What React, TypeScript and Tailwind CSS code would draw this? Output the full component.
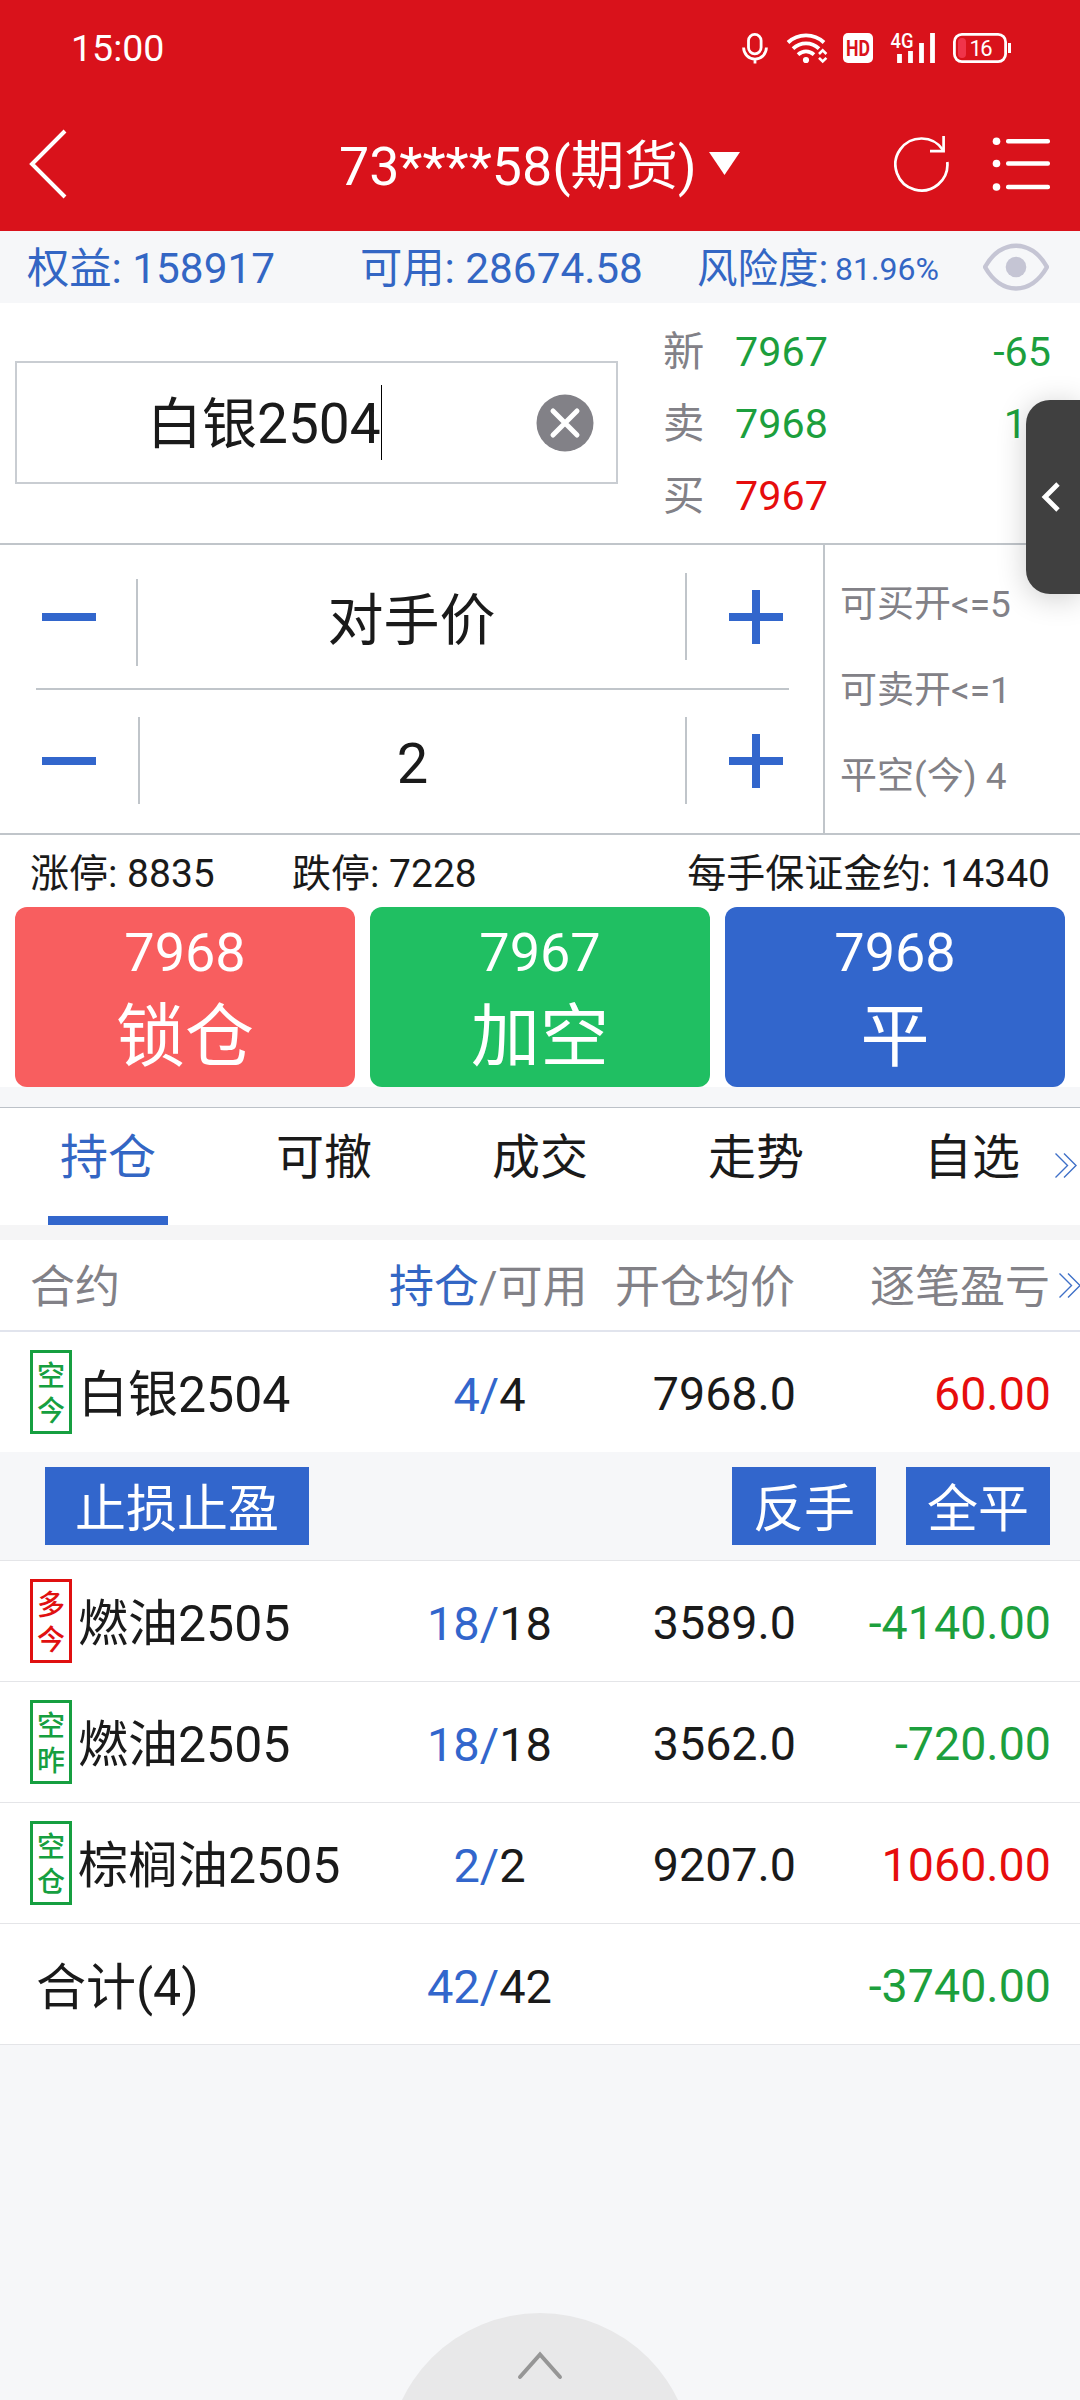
import React, { useState } from "react";

interface IPosition {
  tag: string[];
  side: "long" | "short";
  name: string;
  hold: string;
  usable: string;
  price: string;
  profit: string;
}

const positions: IPosition[] = [
  { tag: ["空", "今"], side: "short", name: "白银2504", hold: "4", usable: "4", price: "7968.0", profit: "60.00" },
  { tag: ["多", "今"], side: "long", name: "燃油2505", hold: "18", usable: "18", price: "3589.0", profit: "-4140.00" },
  { tag: ["空", "昨"], side: "short", name: "燃油2505", hold: "18", usable: "18", price: "3562.0", profit: "-720.00" },
  { tag: ["空", "仓"], side: "short", name: "棕榈油2505", hold: "2", usable: "2", price: "9207.0", profit: "1060.00" },
];

const tabs = ["持仓", "可撤", "成交", "走势", "自选"];

const profitColor = (value: string) =>
  value.startsWith("-") ? "text-[#1c9f3d]" : "text-[#e60d0d]";

const StatusBar = () => (
  <div className="flex h-[96px] items-center justify-between pl-[71px] pr-[68px]">
    <span className="pt-[2px] text-[37.5px] leading-none">15:00</span>
    <svg width="272" height="50" viewBox="740 23 272 50" fill="none">
      {/* mic */}
      <rect x="748.5" y="34.3" width="12.6" height="19.5" rx="6.3" stroke="white" strokeWidth="2.8" />
      <path d="M743.6 47.5a11.4 11.6 0 0 0 22.8 0M755 59v4.5" stroke="white" strokeWidth="2.8" />
      {/* wifi */}
      <path d="M788 42.5c10-9.5 26-9.5 36 0" stroke="white" strokeWidth="3.8" />
      <path d="M793 48.7c7.5-7 18.5-7 26 0" stroke="white" strokeWidth="3.8" />
      <path d="M798 54.6c5-4.3 11-4.3 16 0" stroke="white" strokeWidth="3.8" />
      <circle cx="806" cy="60" r="3.1" fill="white" />
      <path d="M819 54l3.7-3.7 3.7 3.7M819 57.8l3.7 3.7 3.7-3.7" stroke="white" strokeWidth="2.6" />
      {/* hd */}
      <rect x="843" y="33" width="30" height="30" rx="5" fill="white" />
      <text x="858" y="56" fontSize="22" fontWeight="700" textAnchor="middle" textLength="24" lengthAdjust="spacingAndGlyphs" fill="#d9121b">
        HD
      </text>
      {/* signal */}
      <text x="890.5" y="47.5" fontSize="20" fontWeight="500" textLength="23" lengthAdjust="spacingAndGlyphs" fill="white">
        4G
      </text>
      <path d="M899.5 54v9M910.5 51v12M921.5 43v20M932.5 33v30" stroke="white" strokeWidth="4.8" />
      {/* battery */}
      <rect x="954.4" y="34.4" width="51.2" height="27.2" rx="7.5" stroke="white" strokeWidth="2.8" />
      <rect x="958" y="38" width="8" height="20" rx="4" fill="#f0344a" />
      <path d="M1009.5 43v10" stroke="white" strokeWidth="3" />
      <text x="969.5" y="55.5" fontSize="22" fill="white" textLength="23">
        16
      </text>
    </svg>
  </div>
);

const TitleBar = () => (
  <div className="flex h-[135px] items-center px-[28px]">
    <svg width="40" height="70" viewBox="0 0 40 70" fill="none">
      <path d="M37 2L4 35L37 68" stroke="white" strokeWidth="4" />
    </svg>
    <div className="ml-[271px] flex items-center gap-[12px]">
      <span className="pt-[7px] text-[53.7px] leading-none whitespace-nowrap">73****58(期货)</span>
      <svg width="31" height="23" viewBox="0 0 31 23">
        <path d="M0 0H31L15.5 23Z" fill="white" />
      </svg>
    </div>
    <div className="ml-auto flex items-center gap-[42px]">
      <svg width="56" height="58" viewBox="894 135 56 58" fill="none">
        <path d="M943 150A26 26 0 1 0 947.3 162" stroke="white" strokeWidth="2.7" />
        <path d="M943.6 136v15.2H930" stroke="white" strokeWidth="2.7" />
      </svg>
      <svg width="60" height="56" viewBox="992 135 60 56">
        {[140.3, 162.5, 186].map((y) => (
          <g key={y} fill="white">
            <circle cx="996.5" cy={y} r="3.8" />
            <rect x="1006" y={y - 2.3} width="44" height="4.6" rx="2" />
          </g>
        ))}
      </svg>
    </div>
  </div>
);

const Funds = () => (
  <div className="flex h-[72px] items-center bg-[#f6f7f9] pl-[27px] text-[42.3px] leading-none text-[#3366c4] whitespace-nowrap">
    <span className="w-[333px] pt-[5px]">权益: 158917</span>
    <span className="w-[337px] pt-[5px]">可用: 28674.58</span>
    <span className="w-[138px] pt-[5px] text-[40.5px]">风险度:</span>
    <span className="w-[148px] pt-[3px] text-[32px]">81.96%</span>
    <svg width="66" height="48" viewBox="0 0 66 48" fill="none">
      <path d="M2 24C18-4.5 48-4.5 64 24C48 52.5 18 52.5 2 24Z" stroke="#c5c5d4" strokeWidth="4.5" />
      <circle cx="33" cy="24" r="10.3" fill="#c5c5d4" />
    </svg>
  </div>
);

const QuoteRow = ({ label, price, color, volume, cut }: { label: string; price: string; color: string; volume?: string; cut?: boolean }) => (
  <div className="flex h-[72px] items-center">
    <span className="w-[72px] text-[#828187]">{label}</span>
    <span className={color}>{price}</span>
    <span className={`ml-auto text-[#1c9f3d] ${cut ? "pr-[53px]" : "pr-[29px]"}`}>{volume}</span>
  </div>
);

const Contract = () => (
  <div className="flex h-[240px] bg-white">
    <div className="mt-[58px] ml-[15px] flex h-[123px] w-[603px] items-center border-2 border-[#c9cdd2] pl-[130px] pr-[22px]">
      <span className="mt-[4px] text-[55px] leading-none text-[#1a1a1a]">白银2504</span>
      <span className="h-[75px] w-px bg-black" />
      <svg width="58" height="58" viewBox="0 0 58 58" className="ml-auto">
        <circle cx="29" cy="29" r="28.5" fill="#828187" />
        <path d="M17 17L41 41M41 17L17 41" stroke="white" strokeWidth="5" strokeLinecap="round" />
      </svg>
    </div>
    <div className="ml-[45px] flex-1 pt-[14px] text-[41.3px] leading-none">
      <QuoteRow label="新" price="7967" color="text-[#1c9f3d]" volume="-65" />
      <QuoteRow label="卖" price="7968" color="text-[#1c9f3d]" volume="1" cut />
      <QuoteRow label="买" price="7967" color="text-[#e60d0d]" />
    </div>
  </div>
);

const Minus = () => (
  <svg width="54" height="54" viewBox="0 0 54 54">
    <path d="M0 27H54" stroke="#3266cc" strokeWidth="8" />
  </svg>
);

const Plus = () => (
  <svg width="54" height="54" viewBox="0 0 54 54">
    <path d="M0 27H54M27 0V54" stroke="#3266cc" strokeWidth="8" />
  </svg>
);

const OrderForm = () => {
  const [lots, setLots] = useState(2);

  return (
    <div className="flex h-[292px] border-y-2 border-[#c0c5ca] bg-white">
      <div className="w-[823px]">
        <div className="flex h-[143px] items-center pl-[42px]">
          <Minus />
          <span className="mt-[12px] ml-[40px] h-[87px] w-[2px] bg-[#c0c5ca]" />
          <span className="w-[547px] pt-[8px] text-center text-[56px] leading-none">对手价</span>
          <span className="mr-[42px] h-[87px] w-[2px] bg-[#c0c5ca]" />
          <Plus />
        </div>
        <div className="mr-[34px] ml-[36px] h-[2px] bg-[#c0c5ca]" />
        <div className="flex h-[143px] items-center pb-[2px] pl-[42px]">
          <button onClick={() => setLots(Math.max(1, lots - 1))}>
            <Minus />
          </button>
          <span className="ml-[42px] h-[87px] w-[2px] bg-[#c0c5ca]" />
          <span className="w-[545px] pt-[6px] text-center text-[56px] leading-none">{lots}</span>
          <span className="mr-[42px] h-[87px] w-[2px] bg-[#c0c5ca]" />
          <button onClick={() => setLots(lots + 1)}>
            <Plus />
          </button>
        </div>
      </div>
      <div className="flex flex-1 flex-col border-l-2 border-[#c0c5ca] pt-[17px] pl-[15px] text-[37px] leading-[86px] text-[#828187]">
        <span>可买开&lt;=5</span>
        <span>可卖开&lt;=1</span>
        <span>平空(今) 4</span>
      </div>
    </div>
  );
};

const OrderButton = ({ price, label, color }: { price: string; label: string; color: string }) => (
  <button className={`flex h-[180px] w-[340px] flex-col items-center rounded-[12px] leading-none text-white ${color}`}>
    <span className="mt-[19px] text-[54px]">{price}</span>
    <span className="mt-[23px] text-[69px]">{label}</span>
  </button>
);

const DoubleArrow = () => (
  <svg width="22" height="25" viewBox="0 0 22 25" fill="none" className="shrink-0">
    <path d="M0.5 0.5L12.5 12.5L0.5 24.5M9 0.5L21 12.5L9 24.5" stroke="#3f70c8" strokeWidth="1.4" />
  </svg>
);

const Tag = ({ position }: { position: IPosition }) => (
  <div
    className={`flex h-[84px] w-[42px] flex-col items-center justify-center border-3 pt-[3px] text-[28px] leading-[35px] font-medium ${
      position.side === "long" ? "border-[#e01010] text-[#e01010]" : "border-[#169f40] text-[#169f40]"
    }`}
  >
    {position.tag.map((t) => (
      <span key={t}>{t}</span>
    ))}
  </div>
);

const Lots = ({ hold, usable }: { hold: string; usable: string }) => (
  <span className="w-[181px] text-center text-[47px]">
    <span className="text-[#3266cc]">{hold}/</span>
    {usable}
  </span>
);

const PositionRow = ({ position }: { position: IPosition }) => (
  <div className="flex h-[120px] items-center bg-white pl-[30px] text-[46.6px] leading-none whitespace-nowrap">
    <Tag position={position} />
    <span className="ml-[6px] w-[321px] pt-[5px] text-[50px]">{position.name}</span>
    <div className="flex flex-1 items-center pt-[5px]">
      <Lots hold={position.hold} usable={position.usable} />
      <span className="w-[216px] text-right">{position.price}</span>
      <span className={`flex-1 pr-[29px] text-right ${profitColor(position.profit)}`}>{position.profit}</span>
    </div>
  </div>
);

const ActionButton = ({ label, width }: { label: string; width: string }) => (
  <button className={`flex h-[78px] items-center justify-center bg-[#3266cc] pt-[6px] text-[51px] leading-none text-white ${width}`}>
    {label}
  </button>
);

const App = () => {
  const [activeTab, setActiveTab] = useState("持仓");

  return (
    <div className="relative flex h-[2400px] w-[1080px] flex-col overflow-hidden bg-[#f6f7f9] font-[Roboto,'Noto_Sans_CJK_SC',sans-serif] text-[#1a1a1a]">
      <header className="bg-[#d9121b] text-white">
        <StatusBar />
        <TitleBar />
      </header>
      <Funds />
      <Contract />
      <OrderForm />

      <div className="bg-white">
        <div className="flex h-[72px] items-center pt-[6px] pr-[30px] pl-[30px] text-[39px] leading-none">
          <span className="w-[262px]">涨停: 8835</span>
          <span>跌停: 7228</span>
          <span className="ml-auto">每手保证金约: 14340</span>
        </div>
        <div className="flex gap-[15px] px-[15px]">
          <OrderButton price="7968" label="锁仓" color="bg-[#f85e5f]" />
          <OrderButton price="7967" label="加空" color="bg-[#20bf62]" />
          <OrderButton price="7968" label="平" color="bg-[#3266cc]" />
        </div>
      </div>

      <div className="relative mt-[20px] flex h-[118px] border-t border-[#bcc1c8] bg-white">
        {tabs.map((tab) => (
          <button
            key={tab}
            onClick={() => setActiveTab(tab)}
            className={`flex w-[216px] flex-col items-center text-[48px] leading-none ${tab === activeTab ? "text-[#3366c4]" : ""}`}
          >
            <span className="h-[108px] pt-[26px]">{tab}</span>
            {tab === activeTab && <span className="h-[9px] w-[120px] bg-[#3266cc]" />}
          </button>
        ))}
        <div className="absolute top-[45px] right-[3px]">
          <DoubleArrow />
        </div>
      </div>
      <div className="h-[15px] bg-[#f5f5f6]" />

      <div className="flex h-[92px] items-center border-b-2 border-[#e1e4ed] bg-white pl-[30px] text-[45px] leading-none whitespace-nowrap text-[#828187]">
        <span className="w-[359px] shrink-0 pt-[5px]">合约</span>
        <span className="w-[226px] shrink-0 pt-[5px]">
          <span className="text-[#3366c4]">持仓</span>/可用
        </span>
        <span className="w-[255px] shrink-0 pt-[5px]">开仓均价</span>
        <span className="w-[189px] shrink-0 pt-[5px]">逐笔盈亏</span>
        <DoubleArrow />
      </div>

      <PositionRow position={positions[0]} />
      <div className="flex h-[109px] items-center gap-[30px] border-b border-[#e4e5e8] pr-[30px] pl-[45px]">
        <ActionButton label="止损止盈" width="w-[264px]" />
        <div className="flex-1" />
        <ActionButton label="反手" width="w-[144px]" />
        <ActionButton label="全平" width="w-[144px]" />
      </div>
      {positions.slice(1).map((position, i) => (
        <div key={i} className="border-b border-[#e4e5e8]">
          <PositionRow position={position} />
        </div>
      ))}
      <div className="flex h-[121px] items-center border-b border-[#e4e5e8] bg-white pt-[5px] pl-[36px] text-[46.6px] leading-none">
        <span className="w-[363px] pt-[2px] text-[50px]">合计(4)</span>
        <Lots hold="42" usable="42" />
        <span className="flex-1 pr-[29px] text-right text-[#1c9f3d]">-3740.00</span>
      </div>

      {/* floating drawer handles */}
      <div className="absolute top-[400px] right-0 flex h-[194px] w-[54px] items-center rounded-l-[24px] bg-[#404040] pl-[15px] shadow-[0_4px_30px_rgba(0,0,0,0.2)]">
        <svg width="20" height="30" viewBox="0 0 20 30" fill="none">
          <path d="M17 2L4 15L17 28" stroke="white" strokeWidth="4.8" />
        </svg>
      </div>
      <div className="absolute top-[2313px] left-[387px] flex h-[306px] w-[306px] justify-center rounded-full bg-[#e8e8e9] pt-[38px]">
        <svg width="46" height="30" viewBox="0 0 46 30" fill="none">
          <path d="M3 26L23 3.5L43 26" stroke="#969696" strokeWidth="4" strokeLinecap="round" />
        </svg>
      </div>
    </div>
  );
};

export default App;
